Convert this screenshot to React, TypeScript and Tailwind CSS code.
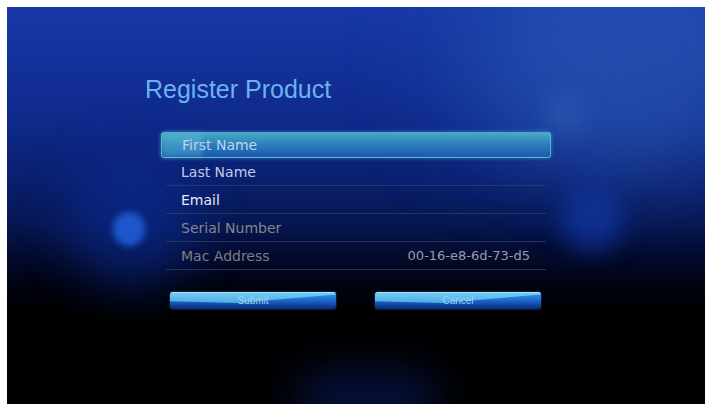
import React from "react";

const ROWS = [
  { label: "Last Name", color: "text-[#c2cbe4]" },
  { label: "Email", color: "text-[#e6e8f2]" },
  { label: "Serial Number", color: "text-[#85878c]" },
  { label: "Mac Address", color: "text-[#7c7e84]", value: "00-16-e8-6d-73-d5" },
];

function GlossButton({ label }: { label: string }) {
  return (
    <div className="relative w-[166px] h-[17px] rounded-[3px] overflow-hidden bg-gradient-to-b from-[#3d9eea] via-[#1c66cc] to-[#0a2a78] shadow-[0_0_2px_rgba(120,200,255,0.5)]">
      <div className="absolute inset-0 bg-gradient-to-b from-[#8fe6fb] to-[#4cc0ec] opacity-70 [clip-path:polygon(0_0,100%_0,100%_15%,40%_65%,0_55%)]" />
      <div className="absolute inset-x-0 top-0 h-px bg-[#a8ecff]/70" />
      <div className="relative flex h-full items-center justify-center">
        <span className="font-['Liberation_Sans',sans-serif] text-[10px] leading-none text-[#9ad4f4]">
          {label}
        </span>
      </div>
    </div>
  );
}

export default function App() {
  return (
    <div className="w-[709px] h-[404px] bg-white pl-[7px] pt-[7px] pr-[4px]">
      <div className="relative w-full h-full overflow-hidden bg-[linear-gradient(180deg,#1838a8_0%,#0f2a8c_28%,#0a1e6c_45%,#061650_55%,#030a2c_63%,#010310_70%,#000_78%)] font-['DejaVu_Sans',sans-serif]">
        {/* bokeh lights */}
        <div className="absolute -right-[60px] -top-[70px] w-[260px] h-[240px] rounded-full bg-[#2c5cb8]/60 blur-2xl" />
        <div className="absolute left-[420px] -top-[40px] w-[200px] h-[200px] rounded-full bg-[#2050b0]/40 blur-2xl" />
        <div className="absolute left-[540px] top-[90px] w-[36px] h-[36px] rounded-full bg-[#3a70c0]/40 blur-md" />
        <div className="absolute left-[60px] top-[150px] w-[130px] h-[130px] rounded-full bg-[#0c30a0]/50 blur-xl" />
        <div className="absolute left-[106px] top-[205px] w-[32px] h-[34px] rounded-full bg-[#1d56cc] blur-[3px]" />
        <div className="absolute left-[555px] top-[180px] w-[60px] h-[64px] rounded-full bg-[#1238a8]/70 blur-md" />
        <div className="absolute left-[290px] top-[370px] w-[140px] h-[50px] rounded-full bg-[#0a1e6a]/70 blur-xl" />

        <div className="relative flex flex-col pl-[138px] pt-[68px]">
          <h1 className="font-['Liberation_Sans',sans-serif] text-[25px] leading-[28px] text-[#6cb2f2]">
            Register Product
          </h1>

          <div className="mt-[29px] ml-[16px] w-[390px] flex flex-col">
            <div className="relative h-[26px] rounded-[3px] border border-[#5cc4dc]/70 bg-gradient-to-b from-[#4aa8c4] via-[#2c7cbc] to-[#1c58b0] shadow-[0_0_4px_rgba(90,200,230,0.5)] flex items-center pl-[20px]">
              <div className="absolute inset-y-0 left-0 w-[40px] rounded-l-[3px] bg-[#6ad0d8]/30 blur-[2px]" />
              <span className="relative text-[14px] leading-none text-[#bcd4f0]">First Name</span>
            </div>
            {ROWS.map((row) => (
              <div
                key={row.label}
                className="mx-[5px] h-[28px] border-b border-[#3c4260]/70 flex items-center justify-between pl-[15px] pr-[16px]"
              >
                <span className={`text-[14px] leading-none ${row.color}`}>{row.label}</span>
                {row.value && (
                  <span className="text-[13px] leading-none text-[#9a9ca2]">{row.value}</span>
                )}
              </div>
            ))}
          </div>

          <div className="mt-[22px] ml-[25px] flex gap-[39px]">
            <GlossButton label="Submit" />
            <GlossButton label="Cancel" />
          </div>
        </div>
      </div>
    </div>
  );
}
